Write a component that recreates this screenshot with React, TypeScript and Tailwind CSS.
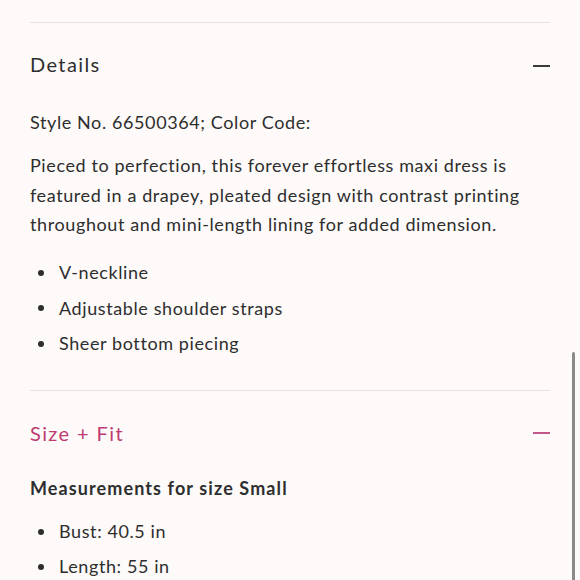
const details = ["V-neckline", "Adjustable shoulder straps", "Sheer bottom piecing"];
const measurements = ["Bust: 40.5 in", "Length: 55 in"];

const Minus = ({ className }: { className: string }) => (
  <span className={`block h-[2px] w-[17px] ${className}`} />
);

const Bullets = ({ items, gap }: { items: string[]; gap: string }) => (
  <ul className={`flex flex-col ${gap}`}>
    {items.map((item) => (
      <li key={item} className="flex items-center h-[24px]">
        <span className="w-[6px] h-[6px] rounded-full bg-[#2e2e2e] ml-[8px] mr-[15px]" />
        <span>{item}</span>
      </li>
    ))}
  </ul>
);

export default function App() {
  return (
    <div
      className="relative h-[580px] w-[580px] overflow-hidden bg-[#fdfaf9] text-[#2e2e2e]"
      style={{ fontFamily: "Lato, 'Open Sans', sans-serif" }}
    >
      <div className="px-[30px] text-[18px] tracking-[0.6px]">
        <div className="h-[22px]" />
        <div className="border-t border-[#e7e3e2]" />
        <div className="flex items-center justify-between h-[86px]">
          <h2 className="text-[20px] tracking-[1.4px] -mt-[4px]">Details</h2>
          <Minus className="bg-[#3a3a3a]" />
        </div>
        <p className="h-[28px] leading-[28px] mt-[-1px]">Style No. 66500364; Color Code:</p>
        <p className="mt-[15px] leading-[29.5px]">
          Pieced to perfection, this forever effortless maxi dress is featured in a drapey, pleated
          design with contrast printing throughout and mini-length lining for added dimension.
        </p>
        <div className="mt-[21px]">
          <Bullets items={details} gap="gap-[11.5px]" />
        </div>
        <div className="h-[34px]" />
        <div className="border-t border-[#e7e3e2]" />
        <div className="flex items-center justify-between h-[84px]">
          <h2 className="text-[20px] tracking-[1.4px] text-[#bf3a72]">Size + Fit</h2>
          <Minus className="bg-[#c4578a]" />
        </div>
        <p className="font-bold tracking-[1.1px] h-[24px] leading-[24px] mt-[1px]">
          Measurements for size Small
        </p>
        <div className="mt-[20px]">
          <Bullets items={measurements} gap="gap-[11px]" />
        </div>
      </div>
      <div className="absolute right-[5px] top-[352px] w-[3px] h-[240px] rounded-full bg-[#8a8a8a]" />
    </div>
  );
}
